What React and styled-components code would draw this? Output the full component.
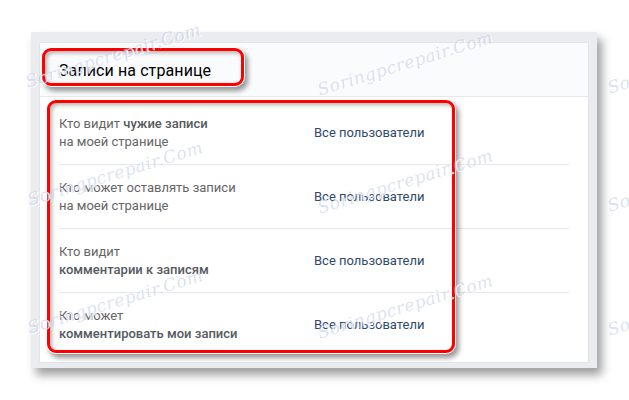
import React from "react";
import styled, { createGlobalStyle } from "styled-components";

const Global = createGlobalStyle`
  html, body { margin: 0; padding: 0; background: #ffffff; }
  body { font-family: Roboto, "Open Sans", Arial, sans-serif; width: 629px; height: 400px; overflow: hidden; }
`;

const Page = styled.div`
  position: relative;
  width: 629px;
  height: 400px;
  padding: 32px 32px 0 31px;
  box-sizing: border-box;
`;

const Frame = styled.div`
  width: 566px;
  height: 336px;
  box-sizing: border-box;
  background: #ebecef;
  padding: 10px 8px 5px 8px;
  box-shadow: 5px 7px 9px rgba(0, 0, 0, 0.38);
`;

const Card = styled.div`
  height: 100%;
  box-sizing: border-box;
  background: #ffffff;
  border: 1px solid #e3e4e8;
  border-radius: 2px;
  display: flex;
  flex-direction: column;
`;

const Header = styled.div`
  position: relative;
  height: 54px;
  flex: none;
  box-sizing: border-box;
  background: #fafbfc;
  border-bottom: 1px solid #e7e8ec;
  display: flex;
  align-items: center;
  padding-left: 19px;
  padding-top: 1px;
`;

const Title = styled.h2`
  margin: 0;
  font-size: 16px;
  font-weight: 400;
  color: #000000;
  letter-spacing: 0.1px;
`;

const Highlight = styled.div`
  position: absolute;
  left: ${(p) => p.$left}px;
  top: ${(p) => p.$top}px;
  width: ${(p) => p.$width}px;
  height: ${(p) => p.$height}px;
  box-sizing: border-box;
  border: 3px solid #ff0000;
  border-radius: 9px;
  box-shadow: 0 0 0 1px #ffffff, 3px 4px 5px 1px rgba(0, 0, 0, 0.4),
    inset 2px 2px 4px rgba(0, 0, 0, 0.3);
  pointer-events: none;
  z-index: 2;
`;

const List = styled.div`
  position: relative;
  padding: 4px 19px 0 19px;
`;

const Row = styled.div`
  display: flex;
  align-items: center;
  height: 64px;
  box-sizing: border-box;
  border-bottom: ${(p) => (p.$last ? "none" : "1px solid #e7e8ec")};
`;

const Label = styled.div`
  width: 255px;
  flex: none;
  font-size: 13px;
  line-height: 18px;
  color: #656565;
`;

const Strong = styled.span`
  font-weight: 500;
  color: #555a60;
`;

const Value = styled.div`
  font-size: 13px;
  line-height: 18px;
  color: #2f4a6b;
`;

const Watermarks = styled.div`
  position: absolute;
  inset: 0;
  pointer-events: none;
  z-index: 5;
  overflow: hidden;
`;

const Mark = styled.span`
  position: absolute;
  left: ${(p) => p.$x}px;
  top: ${(p) => p.$y}px;
  font-family: "DejaVu Serif", "Liberation Serif", serif;
  font-style: italic;
  font-size: 17px;
  letter-spacing: 0.5px;
  color: rgba(170, 184, 225, 0.42);
  text-shadow: 1px 1px 0 rgba(255, 255, 255, 0.9);
  transform: rotate(-17deg);
  transform-origin: left center;
  white-space: nowrap;
`;

const rows = [
  { label: <>Кто видит <Strong>чужие записи</Strong><br />на моей странице</> },
  { label: <>Кто может оставлять записи<br />на моей странице</> },
  { label: <>Кто видит<br /><Strong>комментарии к записям</Strong></> },
  { label: <>Кто может<br /><Strong>комментировать мои записи</Strong></> },
];

const marks = [
  { x: 26, y: 72 },
  { x: 318, y: 80 },
  { x: 608, y: 78 },
  { x: 28, y: 190 },
  { x: 318, y: 198 },
  { x: 608, y: 196 },
  { x: 28, y: 318 },
  { x: 318, y: 323 },
  { x: 608, y: 320 },
];

export default function App() {
  return (
    <>
      <Global />
      <Page>
        <Frame>
          <Card>
            <Header>
              <Title>Записи на странице</Title>
              <Highlight $left={2} $top={5} $width={202} $height={38} />
            </Header>
            <List>
              {rows.map((r, i) => (
                <Row key={i} $last={i === rows.length - 1}>
                  <Label>{r.label}</Label>
                  <Value>Все пользователи</Value>
                </Row>
              ))}
              <Highlight $left={7} $top={3} $width={408} $height={253} />
            </List>
          </Card>
        </Frame>
        <Watermarks>
          {marks.map((m, i) => (
            <Mark key={i} $x={m.x} $y={m.y}>Soringpcrepair.Com</Mark>
          ))}
        </Watermarks>
      </Page>
    </>
  );
}
